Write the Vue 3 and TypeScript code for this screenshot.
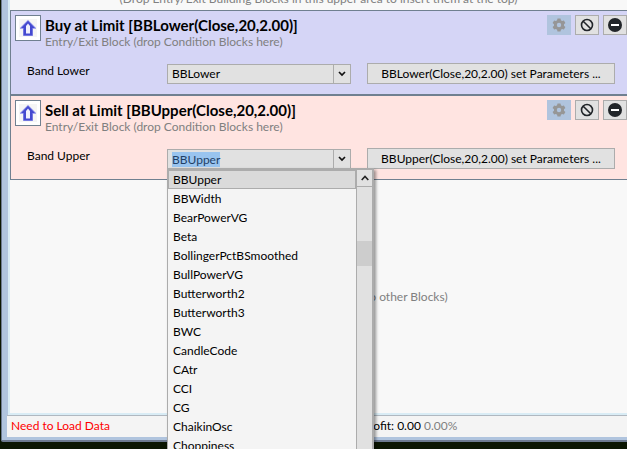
<script setup lang="ts">
import { onMounted, ref } from 'vue'

interface Block {
  id: string
  tone: 'buy' | 'sell'
  title: string
  label: string
  value: string
  parameters: string
  open: boolean
}

const blocks: Block[] = [
  {
    id: 'lower',
    tone: 'buy',
    title: 'Buy at Limit [BBLower(Close,20,2.00)]',
    label: 'Band Lower',
    value: 'BBLower',
    parameters: 'BBLower(Close,20,2.00) set Parameters ...',
    open: false,
  },
  {
    id: 'upper',
    tone: 'sell',
    title: 'Sell at Limit [BBUpper(Close,20,2.00)]',
    label: 'Band Upper',
    value: 'BBUpper',
    parameters: 'BBUpper(Close,20,2.00) set Parameters ...',
    open: true,
  },
]

const indicators: string[] = [
  'BBUpper', 'BBWidth', 'BearPowerVG', 'Beta', 'BollingerPctBSmoothed',
  'BullPowerVG', 'Butterworth2', 'Butterworth3', 'BWC', 'CandleCode',
  'CAtr', 'CCI', 'CG', 'ChaikinOsc', 'Choppiness',
]

const root = ref<HTMLElement | null>(null)

// The open combo box starts with its text selected.
onMounted(() => {
  const field = root.value?.querySelector<HTMLInputElement>('input')
  field?.focus({ preventScroll: true })
  field?.select()
})
</script>

<template>
  <div ref="root" class="desktop">
    <div class="window">
      <main class="canvas">
        <div class="top-hint">
          <p>(Drop Entry/Exit Building Blocks in this upper area to insert them at the top)</p>
        </div>

        <section v-for="block in blocks" :key="block.id" class="block" :class="block.tone">
          <header class="head">
            <div class="direction">
              <svg viewBox="0 0 18 18" width="18" height="18" aria-hidden="true">
                <rect width="18" height="18" fill="#f5f5f5" />
                <path d="M9 .8 17 8.800V10h-3v7H4v-7H1V8.800z" fill="#a4a7ee" />
                <path d="M9 1.800 16 9h-2.500v7.500h-9V9H2z" fill="#4449d0" />
                <path d="M9 4.500 11 7v7.500H7V7z" fill="#f0f0fd" />
              </svg>
            </div>
            <div class="titles">
              <h2>{{ block.title }}</h2>
              <p>Entry/Exit Block (drop Condition Blocks here)</p>
            </div>
            <div class="tools">
              <button class="tool settings" type="button" disabled aria-label="Settings">
                <svg viewBox="0 0 14 14" width="14" height="14" aria-hidden="true">
                  <path
                    fill="#969696"
                    fill-rule="evenodd"
                    d="M5.500 .5h3l.4 1.800 1.200.7 1.800-.6 1.500 2.600-1.400 1.300v1.400l1.400 1.300-1.500 2.600-1.800-.6-1.200.7-.4 1.800h-3l-.4-1.800-1.200-.7-1.800.6L.6 9 2 7.700V6.300L.6 5l1.500-2.600 1.800.6 1.200-.7zM7 4.800a2.200 2.200 0 1 0 0 4.400 2.200 2.200 0 0 0 0-4.400z"
                  />
                </svg>
              </button>
              <button class="tool" type="button" aria-label="Disable">
                <svg viewBox="0 0 14 14" width="14" height="14" aria-hidden="true">
                  <circle cx="7" cy="7" r="5.500" fill="none" stroke="#212529" stroke-width="1.600" />
                  <path d="M3.200 3.200l7.600 7.600" stroke="#212529" stroke-width="1.600" />
                </svg>
              </button>
              <button class="tool" type="button" aria-label="Remove">
                <svg viewBox="0 0 14 14" width="14" height="14" aria-hidden="true">
                  <circle cx="7" cy="7" r="7" fill="#212529" />
                  <path d="M3 7h8" stroke="#fff" stroke-width="2" />
                </svg>
              </button>
            </div>
          </header>

          <div class="fields">
            <label :for="block.id">{{ block.label }}</label>
            <div class="combo">
              <input
                v-if="block.open"
                :id="block.id"
                type="text"
                role="combobox"
                aria-expanded="true"
                aria-controls="indicator-list"
                :value="block.value"
              />
              <select v-else :id="block.id">
                <option>{{ block.value }}</option>
              </select>
              <span class="arrow">
                <svg viewBox="0 0 8 6" width="8" height="6" aria-hidden="true">
                  <path d="M1 1l3 3 3-3" fill="none" stroke="#111" stroke-width="1.700" />
                </svg>
              </span>
              <div v-if="block.open" class="popup">
                <ul id="indicator-list" role="listbox">
                  <li
                    v-for="name in indicators"
                    :key="name"
                    role="option"
                    :aria-selected="name === block.value"
                    :class="{ current: name === block.value }"
                  >{{ name }}</li>
                </ul>
                <div class="scroll">
                  <button type="button" aria-label="Scroll up">
                    <svg viewBox="0 0 8 6" width="8" height="6" aria-hidden="true">
                      <path d="M.7 5 4 1.500 7.300 5" fill="none" stroke="#222" stroke-width="1.600" />
                    </svg>
                  </button>
                  <div class="thumb"></div>
                </div>
              </div>
            </div>
            <button class="params" type="button">{{ block.parameters }}</button>
          </div>
        </section>

        <p class="drop-hint">to other Blocks)</p>
      </main>

      <footer class="status">
        <span class="alert">Need to Load Data</span>
        <span class="profit">Profit: 0.00 <span class="percent">0.00%</span></span>
      </footer>
    </div>
  </div>
</template>

<style>
body {
  overflow: hidden;
}
</style>

<style scoped>
.desktop {
  box-sizing: border-box;
  display: flex;
  height: 100vh;
  padding: 0 0 7px 1px;
  background: #0b1602;
  color: #000;
  font: 12px/16px Lato, "Open Sans", sans-serif;
}

.desktop * {
  box-sizing: border-box;
}

h2,
p,
ul {
  margin: 0;
  padding: 0;
}

button,
input,
select {
  border: 1px solid #acacac;
  border-radius: 0;
  background: #e1e1e1;
  color: #000;
  font: inherit;
}

.window {
  flex: 1;
  min-width: 0;
  display: flex;
  flex-direction: column;
  border: solid #6d7a90;
  border-width: 0 0 2px 1px;
  border-bottom-left-radius: 2px;
  background: #b0c4de;
  padding: 0 0 3px 5px;
}

.canvas {
  flex: 1;
  display: flex;
  flex-direction: column;
  border: solid #d9ecf5;
  border-width: 0 0 2px 2px;
  margin-left: 1px;
  background: #f8f8f8;
}

.top-hint {
  display: flex;
  align-items: flex-end;
  justify-content: center;
  height: 10px;
  padding-bottom: 4px;
  color: #808080;
}

.top-hint p {
  line-height: 14px;
  white-space: nowrap;
}

.block {
  height: 85px;
  border: 1px solid #708090;
  border-right: 0;
  padding: 4px 0 0 4px;
}

.buy {
  background: #d5d5f6;
}

.sell {
  background: #ffe4e1;
}

.head {
  display: flex;
  align-items: flex-start;
}

.direction {
  display: grid;
  place-items: center;
  width: 26px;
  height: 26px;
  border: 1px solid #708090;
  background: #fff;
}

.titles {
  flex: 1;
  margin-left: 4px;
  white-space: nowrap;
}

.titles h2 {
  font-size: 15px;
  font-weight: 700;
  line-height: 20px;
}

.titles p {
  color: #808080;
  line-height: 14px;
}

.tools {
  display: flex;
  gap: 4px;
}

.tool {
  display: grid;
  place-items: center;
  width: 24px;
  height: 20px;
  padding: 0;
}

.settings {
  border-color: #b0c4de;
  background: #b0c4de;
}

.fields {
  display: grid;
  grid-template-columns: 140px 184px 1fr;
  align-items: start;
  padding: 14px 12px 0;
}

.fields label {
  line-height: 16px;
}

.combo {
  position: relative;
  display: flex;
  height: 20px;
  margin-top: 1px;
}

.combo input,
.combo select {
  appearance: none;
  width: 100%;
  height: 20px;
  padding: 0 20px 0 4px;
  outline: 0;
}

.combo input::selection {
  background: #99c4ef;
  color: #1f3f66;
}

.arrow {
  position: absolute;
  top: 1px;
  right: 1px;
  bottom: 1px;
  width: 17px;
  border-left: 1px solid #acacac;
  display: grid;
  place-items: center;
  pointer-events: none;
}

.params {
  height: 21px;
  margin-left: 16px;
  padding: 0;
  white-space: nowrap;
}

.popup {
  position: absolute;
  z-index: 2;
  top: 19px;
  left: 0;
  display: flex;
  width: 207px;
  border: solid #acacac;
  border-width: 2px 2px 0 1px;
  background: #f4f4f4;
  box-shadow: 2px 2px 3px rgba(0, 0, 0, 0.4);
}

.popup ul {
  flex: 1;
  list-style: none;
}

.popup li {
  height: 19px;
  border: 1px solid transparent;
  padding-left: 4px;
  line-height: 17px;
}

.popup .current {
  border-color: #acacac;
  background: #dadada;
}

.scroll {
  width: 16px;
  border-left: 1px solid #acacac;
  background: #e1e1e1;
}

.scroll button {
  display: grid;
  place-items: center;
  width: 100%;
  height: 17px;
  border-width: 0 0 1px;
  padding: 0;
}

.thumb {
  height: 25px;
  margin-top: 54px;
  background: #cdcdcd;
}

.drop-hint {
  margin: auto 0;
  padding-left: 355px;
  color: #808080;
  white-space: nowrap;
}

.status {
  display: flex;
  height: 22px;
  border-top: 1px solid #b0b8c0;
  padding: 0 4px;
  background: #f4f4f4;
  line-height: 20px;
  white-space: nowrap;
}

.alert {
  color: #f00;
  width: 351px;
}

.percent {
  color: #808080;
}
</style>
